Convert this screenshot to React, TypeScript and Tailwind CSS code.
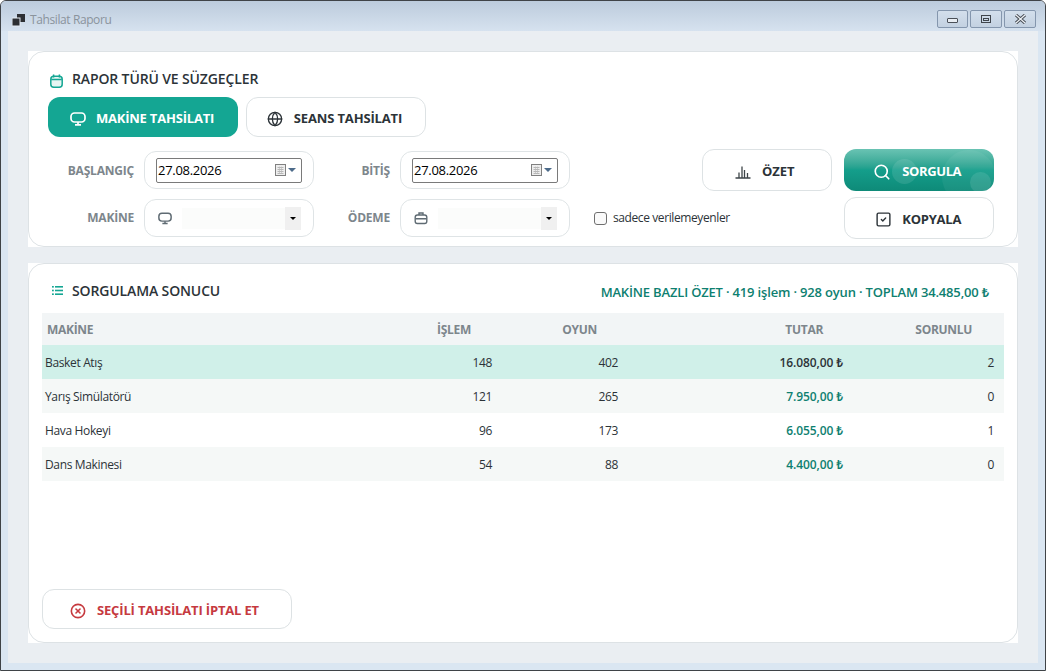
import { CircleX, Globe, Search, SquareCheck } from "lucide-react";
import type { ReactNode } from "react";

const font = { fontFamily: '"Open Sans", "Noto Sans", sans-serif' };

function MonitorIcon({ className }: { className?: string }) {
  return (
    <svg viewBox="0 0 16 14" width="16" height="14" fill="none" stroke="currentColor" strokeWidth="1.7" className={className}>
      <rect x="1" y="1" width="14" height="9" rx="3.5" />
      <path d="M5 12.8h6M8 10v2.8" />
    </svg>
  );
}

function BagIcon() {
  return (
    <svg viewBox="0 0 14 14" width="14" height="14" fill="none" stroke="#5f6b73" strokeWidth="1.4">
      <rect x="1.2" y="4" width="11.6" height="8.5" rx="2.2" />
      <path d="M5 4V2h4v2M1.5 7.8h11" />
    </svg>
  );
}

function CalendarIcon() {
  return (
    <svg viewBox="0 0 13 14" width="13" height="14" fill="none" stroke="#14a693" strokeWidth="1.5">
      <rect x="0.8" y="2.2" width="11.4" height="11" rx="3" fill="#e6f6f3" />
      <path d="M3.6 .6v3M9.4 .6v3M1.2 5.4h10.6" />
    </svg>
  );
}

function ListIcon() {
  return (
    <svg viewBox="0 0 11 11" width="11" height="11" fill="#14a693">
      <rect x="0" y="1" width="1.8" height="1.6" />
      <rect x="3" y="1" width="8" height="1.6" />
      <rect x="0" y="4.7" width="1.8" height="1.6" />
      <rect x="3" y="4.7" width="8" height="1.6" />
      <rect x="0" y="8.4" width="1.8" height="1.6" />
      <rect x="3" y="8.4" width="8" height="1.6" />
    </svg>
  );
}

function ChartIcon() {
  return (
    <svg viewBox="0 0 16 14" width="16" height="14" fill="none" stroke="#3d4448" strokeWidth="1.3">
      <path d="M0.5 13h15M4 12.5V7.5M7 12.5V1.5M9.5 12.5V5M12.5 12.5V8" />
    </svg>
  );
}

function DatePicker() {
  return (
    <div className="flex h-[25px] w-[146px] items-center justify-between rounded-[2px] border border-[#7a7a7a] bg-white pl-[1px] pr-[5px]">
      <span className="pt-[2px] text-[13px] tracking-[-0.3px] text-black">27.08.2026</span>
      <span className="flex items-center gap-[1px]">
        <svg viewBox="0 0 12 13" width="12" height="13">
          <rect x="0.5" y="0.5" width="10" height="11" fill="#eeeeee" stroke="#808080" />
          <path d="M2.5 3.5h6M2.5 5.5h6M2.5 7.5h6M2.5 9.5h6" stroke="#a8a8a8" strokeWidth="0.8" />
          <path d="M4.5 2.5v7.5M6.5 2.5v7.5" stroke="#b8b8b8" strokeWidth="0.6" />
        </svg>
        <span className="h-0 w-0 border-x-[4px] border-t-[4px] border-x-transparent border-t-[#4d6b8a]" />
      </span>
    </div>
  );
}

function FieldBox({ children, pad }: { children: ReactNode; pad: string }) {
  return (
    <div className={`flex h-[38px] w-[170px] items-center rounded-[12px] border border-[#dfe4e6] bg-white ${pad}`}>
      {children}
    </div>
  );
}

function ComboField({ icon }: { icon: ReactNode }) {
  return (
    <FieldBox pad="pl-[13px]">
      <span className="flex w-[24px] text-[#5f6b73]">{icon}</span>
      <span className="h-[21px] w-[103px] bg-[#fbfcfb]" />
      <span className="flex h-[23px] w-[16px] items-center justify-center bg-[#f0f0f0]">
        <span className="h-0 w-0 border-x-[3px] border-t-[3px] border-x-transparent border-t-black" />
      </span>
    </FieldBox>
  );
}

function OutlineButton({ className, children }: { className: string; children: ReactNode }) {
  return (
    <button type="button" className={`flex items-center justify-center border border-[#dde2e4] bg-white pt-[3px] font-bold ${className}`}>
      {children}
    </button>
  );
}

function Label({ width, children }: { width: string; children: ReactNode }) {
  return <span className={`${width} text-right text-[12px] font-bold tracking-[-0.2px] text-[#7d868c]`}>{children}</span>;
}

// the card corners stay white outside the rounded border, as in the app
function Card({ className, children }: { className: string; children: ReactNode }) {
  return (
    <div className={`bg-white ${className}`}>
      <div className="relative flex h-full flex-col rounded-[16px] border border-[#dde2e5] bg-white">{children}</div>
    </div>
  );
}

const rows = [
  { name: "Basket Atış", jobs: 148, games: 402, total: "16.080,00 ₺", issues: 2 },
  { name: "Yarış Simülatörü", jobs: 121, games: 265, total: "7.950,00 ₺", issues: 0 },
  { name: "Hava Hokeyi", jobs: 96, games: 173, total: "6.055,00 ₺", issues: 1 },
  { name: "Dans Makinesi", jobs: 54, games: 88, total: "4.400,00 ₺", issues: 0 },
];

const gridCols = "grid grid-cols-[330px_120px_126px_225px_151px] pr-[10px] pt-[2px] items-center";

export default function App() {
  return (
    <div style={font} className="flex h-[671px] w-[1046px] flex-col overflow-hidden rounded-t-[6px] border border-[#3f4347] bg-[#dae6f2] text-[12px]">
      <div className="flex h-[30px] shrink-0 items-start justify-between bg-gradient-to-b from-[#bccbdc] to-[#d6e2ef] pl-[11px] pr-[9px]">
        <div className="flex items-center gap-[4px] pt-[11px]">
          <svg viewBox="0 0 14 13" width="14" height="13">
            <rect x="5" y="0" width="8" height="8" fill="#2d2f33" />
            <rect x="0" y="4" width="8" height="8" fill="#2d2f33" stroke="#e5ebf2" strokeWidth="1" />
          </svg>
          <span className="text-[12px] leading-[16px] tracking-[-0.4px] text-[#8a939c]">Tahsilat Raporu</span>
        </div>
        <div className="mt-[9px] flex gap-[2px]">
          <span className="flex h-[18px] w-[31px] items-center justify-center rounded-[2px] border border-[#8496ad] bg-gradient-to-b from-[#d3dfec] to-[#c3d1e1]">
            <span className="mt-[3px] h-[5px] w-[11px] rounded-[1px] border border-[#4a5058] bg-[#e8edf3]" />
          </span>
          <span className="flex h-[18px] w-[32px] items-center justify-center rounded-[2px] border border-[#8496ad] bg-gradient-to-b from-[#d3dfec] to-[#c3d1e1]">
            <span className="flex h-[8px] w-[10px] items-center justify-center border border-[#3f454c]">
              <span className="h-[3px] w-[6px] border border-[#3f454c]" />
            </span>
          </span>
          <span className="flex h-[18px] w-[32px] items-center justify-center rounded-[2px] border border-[#8496ad] bg-gradient-to-b from-[#d3dfec] to-[#c3d1e1]">
            <svg viewBox="0 0 12 10" width="13" height="10" fill="none">
              <path d="M1.5 1 10.5 9M10.5 1 1.5 9" stroke="#4a5058" strokeWidth="3.2" />
              <path d="M1.5 1 10.5 9M10.5 1 1.5 9" stroke="#eef2f6" strokeWidth="1.2" />
            </svg>
          </span>
        </div>
      </div>

      <div className="mx-[7px] mb-[7px] flex flex-1 flex-col gap-[16px] bg-[#eaeef2] px-[20px] pt-[20px]">
        <Card className="h-[196px] w-[990px] shrink-0">
          <div className="flex h-[37px] items-end gap-[9px] pl-[21px]">
            <span className="mb-[1px] flex"><CalendarIcon /></span>
            <span className="text-[14px] font-semibold leading-[20px] tracking-[-0.13px] text-[#2c3338]">RAPOR TÜRÜ VE SÜZGEÇLER</span>
          </div>
          <div className="mt-[8px] flex gap-[8px] pl-[19px]">
            <button type="button" className="flex h-[40px] w-[190px] items-center justify-center gap-[10px] rounded-[12px] bg-[#14a693] pr-[2px] pt-[3px] text-[13px] font-bold tracking-[-0.2px] text-white">
              <MonitorIcon />
              MAKİNE TAHSİLATI
            </button>
            <OutlineButton className="h-[40px] w-[180px] gap-[11px] rounded-[12px] pr-[3px] text-[13px] tracking-[-0.15px] text-[#2c3338]">
              <Globe size={16} strokeWidth={2} />
              SEANS TAHSİLATI
            </OutlineButton>
          </div>

          <div className="mt-[12px] flex items-start">
            <div className="flex flex-col gap-[10px] pl-[19px]">
              <div className="mt-[2px] flex items-center gap-[10px]">
                <Label width="w-[86px] pt-[2px]">BAŞLANGIÇ</Label>
                <FieldBox pad="pl-[11px]"><DatePicker /></FieldBox>
                <Label width="w-[66px] pt-[2px]">BİTİŞ</Label>
                <FieldBox pad="pl-[11px]"><DatePicker /></FieldBox>
              </div>
              <div className="flex items-center gap-[10px]">
                <Label width="w-[86px]">MAKİNE</Label>
                <ComboField icon={<MonitorIcon className="h-[13px] w-[14px]" />} />
                <Label width="w-[66px]">ÖDEME</Label>
                <ComboField icon={<BagIcon />} />
                <label className="ml-[14px] flex items-center gap-[6px] text-[12px] tracking-[-0.4px] text-[#2c3338]">
                  <span className="h-[13px] w-[13px] rounded-[3px] border border-[#6f6f6f] bg-[#fafafa]" />
                  sadece verilemeyenler
                </label>
              </div>
            </div>
            <div className="ml-[-28px] flex flex-col items-end gap-[6px]">
              <div className="flex gap-[12px]">
                <OutlineButton className="h-[42px] w-[130px] gap-[11px] rounded-[12px] pr-[4px] text-[13px] text-[#2c3338]">
                  <ChartIcon />
                  ÖZET
                </OutlineButton>
                <button type="button" className="relative flex h-[42px] w-[150px] items-center justify-center gap-[11px] overflow-hidden rounded-[12px] bg-gradient-to-b from-[#69c3b3] via-[#149e8b] via-50% to-[#0e8a78] pr-[3px] pt-[3px] text-[13px] font-bold tracking-[-0.4px] text-white">
                  <span className="absolute left-[48px] top-[10px] h-[25px] w-[25px] rounded-full bg-white/10" />
                  <span className="absolute left-[98px] top-[1px] h-[54px] w-[54px] rounded-full bg-white/5" />
                  <span className="absolute left-[126px] top-[23px] h-[21px] w-[21px] rounded-full bg-white/10" />
                  <Search size={18} strokeWidth={2.2} className="relative" />
                  <span className="relative">SORGULA</span>
                </button>
              </div>
              <OutlineButton className="h-[42px] w-[150px] gap-[10px] rounded-[12px] pr-[1px] text-[13px] tracking-[-0.25px] text-[#2c3338]">
                <SquareCheck size={17} strokeWidth={2} />
                KOPYALA
              </OutlineButton>
            </div>
          </div>
        </Card>

        <Card className="h-[380px] w-[990px] shrink-0">
          <div className="flex h-[49px] items-center justify-between pl-[23px] pr-[28px] pt-[5px]">
            <div className="mb-[2px] flex items-center gap-[9px]">
              <ListIcon />
              <span className="text-[14px] font-semibold tracking-[-0.13px] text-[#2c3338]">SORGULAMA SONUCU</span>
            </div>
            <span className="mt-[4px] text-[13px] font-semibold tracking-[-0.17px] text-[#0e8070]">MAKİNE BAZLI ÖZET · 419 işlem · 928 oyun · TOPLAM 34.485,00 ₺</span>
          </div>
          <div className="mx-[13px]">
            <div className={`${gridCols} h-[32px] bg-[#f2f5f6] text-[12px] font-bold tracking-[-0.3px] text-[#7d868c]`}>
              <span className="pl-[5px]">MAKİNE</span>
              <span className="pr-[21px] text-right">İŞLEM</span>
              <span className="pr-[21px] text-right">OYUN</span>
              <span className="pr-[20px] text-right">TUTAR</span>
              <span className="pr-[22px] text-right">SORUNLU</span>
            </div>
            {rows.map((row, index) => (
              <div
                key={row.name}
                className={`${gridCols} h-[34px] tracking-[-0.35px] text-[#2c3338] ${index === 0 ? "bg-[#d0f0e9]" : index % 2 === 1 ? "bg-[#f5f8f7]" : "bg-white"}`}
              >
                <span className="pl-[3px]">{row.name}</span>
                <span className="text-right">{row.jobs}</span>
                <span className="text-right">{row.games}</span>
                <span className={`text-right font-semibold tracking-[-0.1px] ${index === 0 ? "text-[#2c3338]" : "text-[#0e8070]"}`}>{row.total}</span>
                <span className="text-right">{row.issues}</span>
              </div>
            ))}
          </div>
          <div className="mt-auto mb-[13px] ml-[13px]">
            <OutlineButton className="h-[40px] w-[250px] gap-[11px] rounded-[12px] pr-[5px] text-[13px] tracking-[-0.16px] text-[#c63a3f]">
              <CircleX size={16} strokeWidth={2.4} />
              SEÇİLİ TAHSİLATI İPTAL ET
            </OutlineButton>
          </div>
        </Card>
      </div>
    </div>
  );
}
